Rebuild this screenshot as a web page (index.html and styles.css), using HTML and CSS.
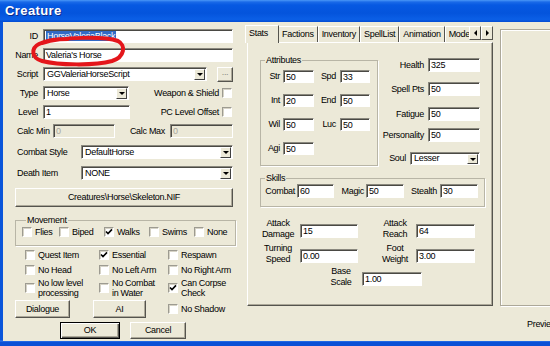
FILE: index.html
```html
<!DOCTYPE html>
<html lang="en">
<head>
    <meta charset="UTF-8">
    <title>Creature</title>
    <link rel="stylesheet" href="styles.css">
</head>
<body>
<div class="window">
    <div class="titlebar">Creature</div>
    <div class="client">
        <!-- left column: base record fields -->
        <div class="left">
            <div class="row">
                <span class="lbl">ID</span>
                <div class="edit name-field"><span class="sel">HorseValeriaBlack</span></div>
            </div>
            <div class="row">
                <span class="lbl">Name</span>
                <div class="edit name-field">Valeria's Horse</div>
            </div>
            <div class="row">
                <span class="lbl">Script</span>
                <div class="combo script-combo"><span class="val">GGValeriaHorseScript</span><span class="drop"></span></div>
                <div class="btn dots">...</div>
            </div>
            <div class="row">
                <span class="lbl">Type</span>
                <div class="combo type-combo"><span class="val">Horse</span><span class="drop"></span></div>
                <span class="fill"></span>
                <span class="cb-lbl">Weapon &amp; Shield</span>
                <span class="cb"></span>
            </div>
            <div class="row">
                <span class="lbl">Level</span>
                <div class="edit level-field">1</div>
                <span class="fill"></span>
                <span class="cb-lbl">PC Level Offset</span>
                <span class="cb"></span>
            </div>
            <div class="row calc">
                <span class="calc-lbl">Calc Min</span>
                <div class="edit disabled calc-min">0</div>
                <span class="calc-lbl2">Calc Max</span>
                <div class="edit disabled calc-max">0</div>
            </div>
            <div class="row wide">
                <span class="wlbl">Combat Style</span>
                <div class="combo wcombo"><span class="val">DefaultHorse</span><span class="drop"></span></div>
            </div>
            <div class="row wide last">
                <span class="wlbl">Death Item</span>
                <div class="combo wcombo"><span class="val">NONE</span><span class="drop"></span></div>
            </div>
            <div class="btn skel">Creatures\Horse\Skeleton.NIF</div>

            <fieldset class="group movement">
                <legend>Movement</legend>
                <div class="move-row">
                    <span class="check"><span class="cb"></span>Flies</span>
                    <span class="check"><span class="cb"></span>Biped</span>
                    <span class="check"><span class="cb on"><svg viewBox="0 0 8 8" width="8" height="8"><path d="M1 3.5 L3 5.6 L7 1.4" fill="none" stroke="#000" stroke-width="1.6"/></svg></span>Walks</span>
                    <span class="check"><span class="cb"></span>Swims</span>
                    <span class="check"><span class="cb"></span>None</span>
                </div>
            </fieldset>

            <div class="flags">
                <span class="check"><span class="cb"></span>Quest Item</span>
                <span class="check"><span class="cb on"><svg viewBox="0 0 8 8" width="8" height="8"><path d="M1 3.5 L3 5.6 L7 1.4" fill="none" stroke="#000" stroke-width="1.6"/></svg></span>Essential</span>
                <span class="check"><span class="cb"></span>Respawn</span>
                <span class="check"><span class="cb"></span>No Head</span>
                <span class="check"><span class="cb"></span>No Left Arm</span>
                <span class="check"><span class="cb"></span>No Right Arm</span>
                <span class="check"><span class="cb"></span><span>No low level<br>processing</span></span>
                <span class="check"><span class="cb"></span><span>No Combat<br>in Water</span></span>
                <span class="check"><span class="cb on"><svg viewBox="0 0 8 8" width="8" height="8"><path d="M1 3.5 L3 5.6 L7 1.4" fill="none" stroke="#000" stroke-width="1.6"/></svg></span><span>Can Corpse<br>Check</span></span>
            </div>

            <div class="btn-row">
                <div class="btn dialogue">Dialogue</div>
                <div class="btn ai">AI</div>
                <span class="check shadow"><span class="cb"></span>No Shadow</span>
            </div>
            <div class="ok-row">
                <div class="btn default ok">OK</div>
                <div class="btn cancel">Cancel</div>
            </div>
        </div>

        <!-- tab control -->
        <div class="tabctl">
            <div class="tabstrip">
                <div class="tabs">
                    <div class="tab active">Stats</div>
                    <div class="tab">Factions</div>
                    <div class="tab">Inventory</div>
                    <div class="tab">SpellList</div>
                    <div class="tab">Animation</div>
                    <div class="tab">Mode</div>
                </div>
                <div class="spin">
                    <div class="spin-btn"><span class="tri-left"></span></div>
                    <div class="spin-btn"><span class="tri-right"></span></div>
                </div>
            </div>
            <div class="tabpanel">
                <div class="stats-top">
                    <fieldset class="group attrs">
                        <legend>Attributes</legend>
                        <div class="attr-row"><span class="albl">Str</span><div class="edit af">50</div><span class="albl2">Spd</span><div class="edit af2">33</div></div>
                        <div class="attr-row"><span class="albl">Int</span><div class="edit af">20</div><span class="albl2">End</span><div class="edit af2">50</div></div>
                        <div class="attr-row"><span class="albl">Wil</span><div class="edit af">50</div><span class="albl2">Luc</span><div class="edit af2">50</div></div>
                        <div class="attr-row"><span class="albl">Agi</span><div class="edit af">50</div></div>
                    </fieldset>
                    <div class="vitals">
                        <div class="vrow health"><span class="vlbl">Health</span><div class="edit vf">325</div></div>
                        <div class="vrow spell"><span class="vlbl">Spell Pts</span><div class="edit vf">50</div></div>
                        <div class="vrow fatigue"><span class="vlbl">Fatigue</span><div class="edit vf">50</div></div>
                        <div class="vrow personality"><span class="vlbl">Personality</span><div class="edit vf">50</div></div>
                        <div class="vrow soul"><span class="vlbl">Soul</span><div class="combo soul-combo"><span class="val">Lesser</span><span class="drop"></span></div></div>
                    </div>
                </div>

                <fieldset class="group skills">
                    <legend>Skills</legend>
                    <div class="skill-row">
                        <span class="slbl s1">Combat</span><div class="edit sf">60</div>
                        <span class="slbl s2">Magic</span><div class="edit sf">50</div>
                        <span class="slbl s3">Stealth</span><div class="edit sf">30</div>
                    </div>
                </fieldset>

                <div class="phys-row first">
                    <span class="plbl">Attack<br>Damage</span><div class="edit pf">15</div>
                    <span class="plbl plbl2">Attack<br>Reach</span><div class="edit pf">64</div>
                </div>
                <div class="phys-row">
                    <span class="plbl">Turning<br>Speed</span><div class="edit pf">0.00</div>
                    <span class="plbl plbl2">Foot<br>Weight</span><div class="edit pf">3.00</div>
                </div>
                <div class="phys-row scale">
                    <span class="plbl">Base<br>Scale</span><div class="edit pf">1.00</div>
                </div>
            </div>
        </div>

        <!-- preview area -->
        <div class="preview-col">
            <div class="preview"></div>
            <div class="preview-lbl">Preview</div>
        </div>
    </div>

    <svg class="scribble" width="550" height="346" viewBox="0 0 550 346">
        <path d="M42 43 C62 37 104 36 118 41 C126 45 125 57 112 61 C94 66 58 65 42 61 C31 58 31 48 39 44 C47 40 58 39 68 39"
              fill="none" stroke="#e4161b" stroke-width="4" stroke-linecap="round"/>
    </svg>
</div>
</body>
</html>
```

FILE: styles.css
```css
* {
    box-sizing: border-box;
}

body {
    margin: 0;
    font-family: "Liberation Sans", Arial, sans-serif;
    font-size: 9px;
    line-height: 11px;
    letter-spacing: -0.3px;
    color: #000;
    background: #fff;
}

.window {
    position: relative;
    width: 550px;
    height: 346px;
    overflow: hidden;
    display: flex;
    flex-direction: column;
    background: linear-gradient(to bottom, #0a55da 0, #0a55da 340px, #3a7ff0 341px, #0a50d6 342px);
}

.titlebar {
    height: 22px;
    padding: 4px 0 0 5px;
    color: #fff;
    font-size: 13px;
    line-height: 14px;
    font-weight: bold;
    letter-spacing: 0.4px;
    text-shadow: 1px 1px 0 #0b2a8a;
    background: linear-gradient(to bottom, #4a98f7 0, #1a6ae8 2px, #0659e2 5px, #0454dc 60%, #0b5fe6 88%, #034bd2 100%);
}

.client {
    display: flex;
    height: 319px;
    margin-left: 3px;
    background: #ece9d8;
    overflow: hidden;
}

/* ---------- common controls ---------- */

.edit {
    flex: none;
    height: 14px;
    padding: 1px 0 0 2px;
    background: #fff;
    border: 1px solid;
    border-color: #8a887e #fff #fff #8a887e;
    box-shadow: inset 1px 1px 0 #4a4944;
    white-space: nowrap;
    overflow: hidden;
}

.edit.disabled {
    background: #ece9d8;
    color: #a7a69c;
}

.sel {
    background: #316ac5;
    color: #fff;
    padding: 0 1px;
}

.combo {
    flex: none;
    display: flex;
    height: 14px;
    background: #fff;
    border: 1px solid;
    border-color: #8a887e #fff #fff #8a887e;
    box-shadow: inset 1px 1px 0 #4a4944;
}

.combo .val {
    flex: 1;
    padding: 1px 0 0 3px;
    white-space: nowrap;
    overflow: hidden;
}

.combo .drop {
    width: 11px;
    margin: 1px 1px 0 0;
    background: #ece9d8;
    border: 1px solid;
    border-color: #fff #404040 #404040 #fff;
    display: flex;
    align-items: center;
    justify-content: center;
}

.combo .drop::after {
    content: "";
    border-left: 3px solid transparent;
    border-right: 3px solid transparent;
    border-top: 3px solid #000;
}

.btn {
    flex: none;
    display: flex;
    align-items: center;
    justify-content: center;
    background: #ece9d8;
    border: 1px solid;
    border-color: #fff #55544e #55544e #fff;
    box-shadow: inset -1px -1px 0 #aca899;
}

.btn.default {
    border-color: #000;
    box-shadow: inset 1px 1px 0 #fff, inset -1px -1px 0 #55544e, inset -2px -2px 0 #aca899;
}

.cb {
    flex: none;
    width: 10px;
    height: 10px;
    background: #fff;
    border: 1px solid;
    border-color: #9d9b91 #fff #fff #9d9b91;
    box-shadow: inset 1px 1px 0 #d6d3c6;
    display: flex;
    align-items: center;
    justify-content: center;
}

.check {
    display: flex;
    align-items: center;
    gap: 3px;
    white-space: nowrap;
}

.group {
    margin: 0;
    padding: 0;
    min-width: 0;
    border: 1px solid #b8b5a6;
    box-shadow: 1px 1px 0 #fff;
}

.group legend {
    padding: 0 1px;
    margin-left: 4px;
    line-height: 10px;
    background: #ece9d8;
}

.fill {
    flex: 1;
}

/* ---------- left column ---------- */

.left {
    flex: none;
    width: 218px;
    margin-left: 12px;
    padding-top: 7px;
}

.row {
    display: flex;
    align-items: center;
    height: 14px;
    margin-bottom: 5px;
}

.lbl {
    width: 23px;
    margin-right: 5px;
    text-align: right;
    white-space: nowrap;
}

.name-field {
    width: 190px;
}

.script-combo {
    width: 164px;
}

.dots {
    width: 16px;
    height: 15px;
    margin-left: 10px;
    color: #8a887e;
    line-height: 8px;
    align-items: flex-start;
}

.type-combo {
    width: 86px;
}

.level-field {
    width: 87px;
}

.cb-lbl {
    margin-right: 3px;
    white-space: nowrap;
}

.row .cb {
    margin-right: 1px;
}

.row.calc,
.row.wide {
    margin-bottom: 7px;
}

.row.last {
    margin-bottom: 8px;
}

.calc-lbl {
    width: 38px;
    padding-left: 2px;
    white-space: nowrap;
}

.calc-min {
    width: 62px;
}

.calc-lbl2 {
    width: 50px;
    margin-right: 5px;
    text-align: right;
    white-space: nowrap;
}

.calc-max {
    width: 63px;
}

.wlbl {
    width: 66px;
    padding-left: 2px;
    white-space: nowrap;
}

.wcombo {
    width: 152px;
}

.skel {
    width: 218px;
    height: 19px;
}

.movement {
    width: 221px;
    height: 31px;
    margin-top: 8px;
    padding: 1px 0 0 6px;
}

.move-row {
    display: grid;
    grid-template-columns: 37px 45px 45px 45px auto;
    height: 12px;
    align-items: center;
}

.flags {
    display: grid;
    grid-template-columns: 74px 69px auto;
    grid-template-rows: 15px 15px 22px;
    align-items: center;
    margin: 1px 0 0 10px;
}

.flags .check {
    line-height: 10px;
}

.btn-row {
    display: flex;
    align-items: center;
    height: 18px;
    margin-top: 1px;
}

.dialogue {
    width: 55px;
    height: 18px;
}

.ai {
    width: 53px;
    height: 18px;
    margin-left: 23px;
}

.shadow {
    margin-left: 22px;
}

.ok-row {
    display: flex;
    margin-top: 4px;
}

.ok {
    width: 60px;
    height: 17px;
    margin-left: 45px;
}

.cancel {
    width: 56px;
    height: 17px;
    margin-left: 10px;
}

/* ---------- tab control ---------- */

.tabctl {
    flex: none;
    width: 248px;
    margin: 3px 0 0 12px;
}

.tabstrip {
    display: flex;
    align-items: flex-end;
    height: 17px;
}

.tabs {
    display: flex;
    align-items: flex-end;
    width: 224px;
    height: 18px;
    margin-bottom: -1px;
    overflow: hidden;
}

.tab {
    flex: none;
    height: 16px;
    padding: 2px 3px 0 3px;
    margin-bottom: 1px;
    white-space: nowrap;
    border-top: 1px solid #fff;
    border-left: 1px solid #fff;
    border-right: 1px solid #55544e;
}

.tab.active {
    position: relative;
    z-index: 1;
    height: 18px;
    margin-bottom: 0;
    padding: 2px 10px 0 3px;
    background: #ece9d8;
}

.tab.active + .tab {
    border-left: none;
}

.spin {
    display: flex;
    margin-bottom: 2px;
}

.spin-btn {
    width: 12px;
    height: 14px;
    background: #ece9d8;
    border: 1px solid;
    border-color: #fff #55544e #55544e #fff;
    display: flex;
    align-items: center;
    justify-content: center;
}

.tri-left {
    border-top: 3px solid transparent;
    border-bottom: 3px solid transparent;
    border-right: 3px solid #000;
}

.tri-right {
    border-top: 3px solid transparent;
    border-bottom: 3px solid transparent;
    border-left: 3px solid #000;
}

.tabpanel {
    width: 246px;
    height: 264px;
    margin-left: 2px;
    padding: 12px 0 0 12px;
    border: 1px solid;
    border-color: #fff #55544e #55544e #fff;
    box-shadow: inset -1px -1px 0 #aca899;
}

.stats-top {
    display: flex;
    height: 111px;
}

.attrs {
    width: 118px;
    height: 111px;
    padding: 5px 0 0 0;
}

.attr-row {
    display: flex;
    align-items: center;
    height: 13px;
    margin-bottom: 11px;
}

.albl {
    width: 19px;
    margin-right: 3px;
    text-align: right;
}

.albl2 {
    width: 22px;
    margin-right: 4px;
    text-align: right;
}

.af {
    width: 31px;
    height: 13px;
}

.af2 {
    width: 30px;
    height: 13px;
}

.vitals {
    width: 100px;
    margin-left: 2px;
}

.vrow {
    display: flex;
    align-items: center;
    height: 14px;
}

.vrow.health { margin-top: 3px; }
.vrow.spell { margin-top: 10px; }
.vrow.fatigue { margin-top: 11px; }
.vrow.personality { margin-top: 7px; }
.vrow.soul { margin-top: 10px; height: 13px; }

.vlbl {
    flex: 1;
    margin-right: 4px;
    text-align: right;
    white-space: nowrap;
}

.vf {
    width: 52px;
}

.soul-combo {
    width: 70px;
    height: 13px;
}

.soul-combo .val {
    padding-top: 0;
}

.skills {
    width: 225px;
    margin-top: 7px;
    padding: 1px 0 8px 0;
}

.skill-row {
    display: flex;
    align-items: center;
    height: 14px;
}

.slbl {
    text-align: right;
    white-space: nowrap;
}

.s1 { width: 34px; margin-right: 2px; }
.s2 { width: 30px; margin-right: 2px; }
.s3 { width: 33px; margin-right: 3px; }

.sf {
    width: 38px;
}

.skill-row .sf:first-of-type {
    width: 37px;
}

.phys-row {
    display: flex;
    align-items: center;
    height: 22px;
    margin-top: 3px;
}

.phys-row.first {
    margin-top: 11px;
}

.phys-row.scale {
    margin-top: 1px;
    padding-left: 64px;
}

.plbl {
    width: 36px;
    margin-right: 4px;
    text-align: center;
    line-height: 11px;
}

.plbl2 {
    width: 34px;
    margin-left: 20px;
}

.phys-row.scale .plbl {
    width: 34px;
}

.pf {
    width: 58px;
    margin-top: 3px;
}

.phys-row .pf:last-child {
    width: 59px;
}

.phys-row.scale .pf {
    width: 60px;
}

/* ---------- preview ---------- */

.preview-col {
    flex: none;
    width: 120px;
    margin: 7px 0 0 7px;
}

.preview {
    height: 277px;
    border: 1px solid #aca899;
    box-shadow: inset 1px 1px 0 #fff, 1px 1px 0 #fff;
}

.preview-lbl {
    margin: 13px 0 0 27px;
}

.scribble {
    position: absolute;
    left: 0;
    top: 0;
    pointer-events: none;
}
```
